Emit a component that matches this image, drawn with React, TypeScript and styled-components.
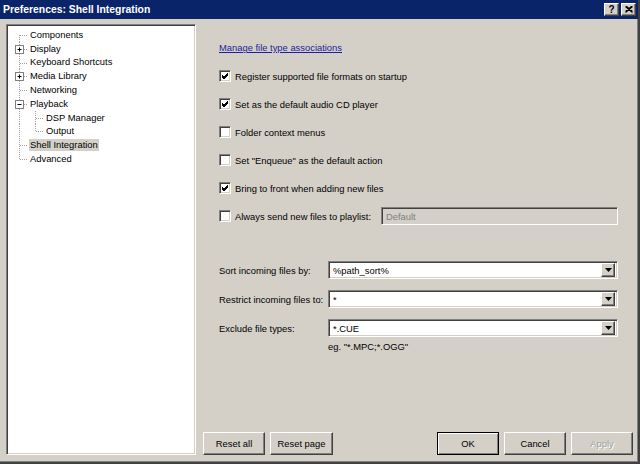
import React from "react";
import styled, { createGlobalStyle, css } from "styled-components";

const GlobalStyle = createGlobalStyle`
  html, body {
    margin: 0;
    padding: 0;
    background: #d4d0c8;
  }
  * {
    box-sizing: border-box;
  }
`;

const FONT = `"Liberation Sans", Arial, sans-serif`;

const raised = css`
  border: 1px solid;
  border-color: #ffffff #404040 #404040 #ffffff;
  box-shadow: inset -1px -1px 0 #808080, inset 1px 1px 0 #d4d0c8;
`;

const sunken = css`
  border: 1px solid;
  border-color: #808080 #ffffff #ffffff #808080;
  box-shadow: inset 1px 1px 0 #404040, inset -1px -1px 0 #d4d0c8;
`;

const Window = styled.div`
  width: 640px;
  height: 464px;
  display: flex;
  flex-direction: column;
  background: #d4d0c8;
  border-right: 2px solid #404040;
  border-bottom: 2px solid #404040;
  box-shadow: inset -1px -1px 0 #808080;
  font-family: ${FONT};
  font-size: 9.4px;
  color: #000;
`;

const TitleBar = styled.div`
  height: 19px;
  flex: none;
  display: flex;
  align-items: center;
  justify-content: space-between;
  padding: 0 2px 0 3px;
  background: #0a246a;
`;

const Title = styled.span`
  color: #fff;
  font-weight: bold;
  font-size: 10.4px;
`;

const TitleButtons = styled.div`
  display: flex;
  gap: 2px;
`;

const TitleButton = styled.div`
  width: 15px;
  height: 13px;
  ${raised};
  background: #d4d0c8;
  display: flex;
  align-items: center;
  justify-content: center;
  font-weight: bold;
  font-size: 10px;
  line-height: 1;
  color: #000;
`;

const Body = styled.div`
  flex: 1;
  display: flex;
  gap: 7px;
  padding: 5px 5px 7px 6px;
  min-height: 0;
`;

const TreePanel = styled.div`
  width: 190px;
  flex: none;
  background: #fff;
  ${sunken};
  padding: 3px 0 0 2px;
`;

const TreeRow = styled.div`
  height: 13.8px;
  display: flex;
  align-items: center;
`;

const TreeLabel = styled.span<{ $selected?: boolean }>`
  padding: 0 1px;
  line-height: 12px;
  white-space: nowrap;
  background: ${(p) => (p.$selected ? "#d4d0c8" : "transparent")};
`;

const RightColumn = styled.div`
  flex: 1;
  display: flex;
  flex-direction: column;
`;

const Content = styled.div`
  flex: 1;
  padding: 17px 15px 0 16px;
  display: flex;
  flex-direction: column;
`;

const Link = styled.a`
  color: #1c1ca0;
  text-decoration: underline;
  height: 14px;
  line-height: 14px;
  cursor: pointer;
`;

const CheckRow = styled.label`
  display: flex;
  align-items: center;
  gap: 4px;
  height: 14px;
  margin-top: 14px;
`;

const Box = styled.span`
  width: 12px;
  height: 12px;
  flex: none;
  background: #fff;
  ${sunken};
  display: flex;
  align-items: center;
  justify-content: center;
`;

const PlaylistField = styled.div`
  margin-left: auto;
  width: 237px;
  height: 18px;
  ${sunken};
  background: #d4d0c8;
  color: #808080;
  padding: 0 4px;
  display: flex;
  align-items: center;
`;

const FormGrid = styled.div`
  margin-top: 38px;
  display: grid;
  grid-template-columns: 109px 1fr;
  row-gap: 11px;
  align-items: center;
`;

const ComboBox = styled.div`
  height: 18px;
  ${sunken};
  background: #fff;
  display: flex;
  align-items: center;
  padding: 2px 2px 2px 4px;
`;

const ComboText = styled.span`
  flex: 1;
`;

const DropButton = styled.div`
  width: 14px;
  height: 14px;
  ${raised};
  background: #d4d0c8;
  display: flex;
  align-items: center;
  justify-content: center;
`;

const Hint = styled.div`
  grid-column: 2;
  margin-top: -7px;
`;

const ButtonRow = styled.div`
  height: 23px;
  flex: none;
  display: flex;
  gap: 5px;
`;

const Spacer = styled.div`
  flex: 1;
`;

const Button = styled.button<{ $default?: boolean; $width?: number }>`
  width: ${(p) => p.$width ?? 62}px;
  height: 23px;
  font-family: ${FONT};
  font-size: 9.4px;
  background: #d4d0c8;
  color: #000;
  padding: 0;
  ${raised};
  ${(p) =>
    p.$default &&
    css`
      outline: 1px solid #000;
      outline-offset: -1px;
      border-color: #000 #404040 #404040 #000;
      box-shadow: inset 1px 1px 0 #fff, inset -1px -1px 0 #808080;
    `}
  &:disabled {
    color: #a0a0a0;
    text-shadow: 1px 1px 0 #fff;
  }
`;

const Check = () => (
  <svg width="8" height="8" viewBox="0 0 8 8">
    <path d="M1 3 L3 5 L7 1 M1 4 L3 6 L7 2 M1 5 L3 7 L7 3" stroke="#000" strokeWidth="1" fill="none" />
  </svg>
);

const DownArrow = () => (
  <svg width="7" height="4" viewBox="0 0 7 4">
    <path d="M0 0 H7 L3.5 4 Z" fill="#000" />
  </svg>
);

const CloseGlyph = () => (
  <svg width="8" height="7" viewBox="0 0 8 7">
    <path d="M0.5 0.5 L7.5 6.5 M1.5 0.5 L7.5 5.5 M7.5 0.5 L0.5 6.5 M6.5 0.5 L0.5 5.5" stroke="#000" strokeWidth="1.2" />
  </svg>
);

const dot = "#a0a0a0";

// root level connector: vertical trunk + branch, optional expander
const RootConnector: React.FC<{ first?: boolean; last?: boolean; box?: "plus" | "minus" }> = ({ first, last, box }) => (
  <svg width="20" height="14" viewBox="0 0 20 14" style={{ flex: "none" }}>
    <line x1="10.5" y1={first ? 7 : 0} x2="10.5" y2={last ? 7 : 14} stroke={dot} strokeDasharray="1 1" />
    <line x1="11" y1="7.5" x2="19" y2="7.5" stroke={dot} strokeDasharray="1 1" />
    {box && (
      <g>
        <rect x="6.5" y="3.5" width="8" height="8" fill="#fff" stroke="#808080" />
        <line x1="8.5" y1="7.5" x2="12.5" y2="7.5" stroke="#000" />
        {box === "plus" && <line x1="10.5" y1="5.5" x2="10.5" y2="9.5" stroke="#000" />}
      </g>
    )}
  </svg>
);

const ChildConnector: React.FC<{ last?: boolean }> = ({ last }) => (
  <>
    <svg width="20" height="14" viewBox="0 0 20 14" style={{ flex: "none" }}>
      <line x1="10.5" y1="0" x2="10.5" y2="14" stroke={dot} strokeDasharray="1 1" />
    </svg>
    <svg width="16" height="14" viewBox="0 0 16 14" style={{ flex: "none" }}>
      <line x1="6.5" y1="0" x2="6.5" y2={last ? 7 : 14} stroke={dot} strokeDasharray="1 1" />
      <line x1="7" y1="7.5" x2="15" y2="7.5" stroke={dot} strokeDasharray="1 1" />
    </svg>
  </>
);

type Node = { label: string; child?: boolean; box?: "plus" | "minus"; selected?: boolean };

const tree: Node[] = [
  { label: "Components" },
  { label: "Display", box: "plus" },
  { label: "Keyboard Shortcuts" },
  { label: "Media Library", box: "plus" },
  { label: "Networking" },
  { label: "Playback", box: "minus" },
  { label: "DSP Manager", child: true },
  { label: "Output", child: true },
  { label: "Shell Integration", selected: true },
  { label: "Advanced" },
];

const checks = [
  { label: "Register supported file formats on startup", checked: true },
  { label: "Set as the default audio CD player", checked: true },
  { label: "Folder context menus", checked: false },
  { label: "Set \"Enqueue\" as the default action", checked: false },
  { label: "Bring to front when adding new files", checked: true },
];

const combos = [
  { label: "Sort incoming files by:", value: "%path_sort%" },
  { label: "Restrict incoming files to:", value: "*" },
  { label: "Exclude file types:", value: "*.CUE" },
];

export default function App() {
  return (
    <Window>
      <GlobalStyle />
      <TitleBar>
        <Title>Preferences: Shell Integration</Title>
        <TitleButtons>
          <TitleButton>?</TitleButton>
          <TitleButton>
            <CloseGlyph />
          </TitleButton>
        </TitleButtons>
      </TitleBar>
      <Body>
        <TreePanel>
          {tree.map((n, i) => (
            <TreeRow key={n.label}>
              {n.child ? (
                <ChildConnector last={n.label === "Output"} />
              ) : (
                <RootConnector first={i === 0} last={i === tree.length - 1} box={n.box} />
              )}
              <TreeLabel $selected={n.selected}>{n.label}</TreeLabel>
            </TreeRow>
          ))}
        </TreePanel>
        <RightColumn>
          <Content>
            <Link>Manage file type associations</Link>
            {checks.map((c) => (
              <CheckRow key={c.label}>
                <Box>{c.checked && <Check />}</Box>
                {c.label}
              </CheckRow>
            ))}
            <CheckRow>
              <Box />
              Always send new files to playlist:
              <PlaylistField>Default</PlaylistField>
            </CheckRow>
            <FormGrid>
              {combos.map((c) => (
                <React.Fragment key={c.label}>
                  <span>{c.label}</span>
                  <ComboBox>
                    <ComboText>{c.value}</ComboText>
                    <DropButton>
                      <DownArrow />
                    </DropButton>
                  </ComboBox>
                </React.Fragment>
              ))}
              <Hint>eg. "*.MPC;*.OGG"</Hint>
            </FormGrid>
          </Content>
          <ButtonRow>
            <Button>Reset all</Button>
            <Button $width={63}>Reset page</Button>
            <Spacer />
            <Button $default>OK</Button>
            <Button>Cancel</Button>
            <Button disabled>Apply</Button>
          </ButtonRow>
        </RightColumn>
      </Body>
    </Window>
  );
}
